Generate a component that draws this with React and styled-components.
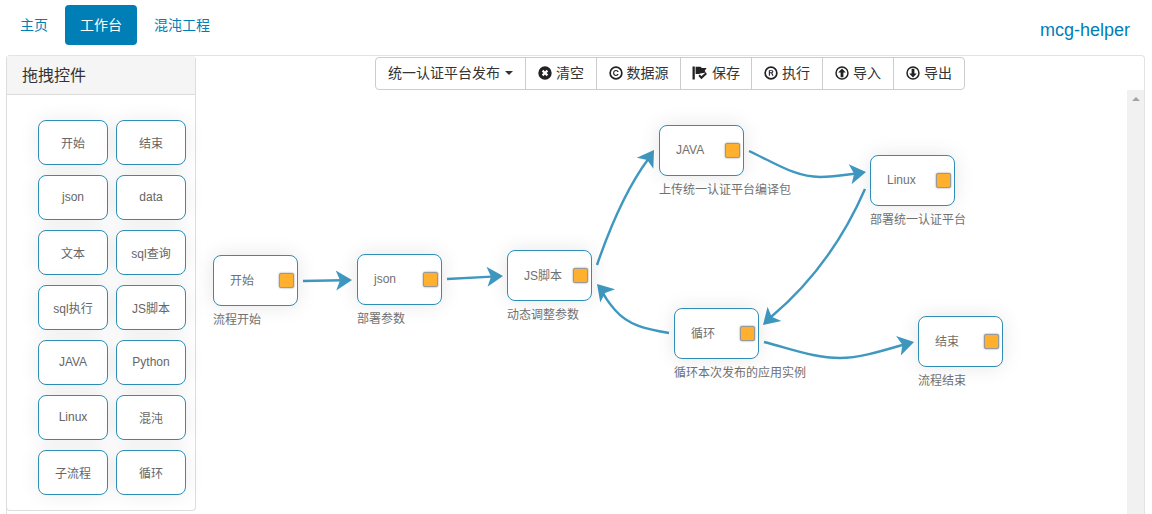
import React from 'react';
import styled, { createGlobalStyle } from 'styled-components';

const BLUE = '#007eb6';
const LINE = '#3f98bf';

const GlobalStyle = createGlobalStyle`
  html, body {
    margin: 0;
    padding: 0;
    height: 514px;
    overflow: hidden;
    background: #fff;
  }
  body {
    font-family: "Liberation Sans", "Noto Sans CJK SC", sans-serif;
    font-size: 14px;
    color: #333;
  }
`;

const Page = styled.div`
  width: 1152px;
  height: 514px;
  overflow: hidden;
  display: flex;
  flex-direction: column;
`;

const Header = styled.header`
  height: 55px;
  padding: 5px 22px 0 5px;
  box-sizing: border-box;
  display: flex;
  justify-content: space-between;
`;

const Nav = styled.nav`
  display: flex;
  gap: 2px;
  height: 40px;
`;

const Tab = styled.a`
  display: flex;
  align-items: center;
  padding: 0 15px 2px;
  border-radius: 4px;
  font-size: 14px;
  color: ${({ $active }) => ($active ? '#fff' : BLUE)};
  background: ${({ $active }) => ($active ? BLUE : 'transparent')};
`;

const Brand = styled.a`
  font-size: 18px;
  line-height: 20px;
  margin-top: 15px;
  color: ${BLUE};
`;

const Workspace = styled.main`
  flex: 1;
  display: flex;
  margin: 0 7px 0 6px;
  border: 1px solid #e3e3e3;
  border-bottom: 0;
  border-radius: 4px 4px 0 0;
  min-height: 0;
`;

const Panel = styled.aside`
  width: 190px;
  height: 455px;
  margin-left: -1px;
  box-sizing: border-box;
  border: 1px solid #ddd;
  border-top: 0;
  border-radius: 4px;
  display: flex;
  flex-direction: column;
`;

const PanelHeading = styled.h3`
  margin: 0;
  height: 39px;
  flex: none;
  box-sizing: border-box;
  padding: 0 0 3px 15px;
  display: flex;
  align-items: center;
  font-size: 16px;
  font-weight: 400;
  color: #333;
  background: #f5f5f5;
  border-bottom: 1px solid #ddd;
`;

const Palette = styled.div`
  display: grid;
  grid-template-columns: 70px 70px;
  grid-auto-rows: 45px;
  gap: 10px 8px;
  padding: 25px 0 0 31px;
`;

const PaletteItem = styled.div`
  box-sizing: border-box;
  display: flex;
  align-items: center;
  justify-content: center;
  padding-bottom: 1px;
  background: #fff;
  border: 1px solid #2d8fb6;
  border-radius: 8px;
  box-shadow: 0 0 20px rgba(0, 0, 0, 0.08);
  font-size: 12px;
  color: #666;
`;

const Main = styled.section`
  flex: 1;
  min-width: 0;
  display: flex;
  flex-direction: column;
  position: relative;
`;

const ToolbarRow = styled.div`
  height: 34px;
  flex: none;
  box-sizing: border-box;
  display: flex;
  justify-content: center;
  padding-top: 1px;
`;

const ToolGroup = styled.div`
  display: flex;
  height: 33px;
  box-sizing: border-box;
  border: 1px solid #ccc;
  border-radius: 4px;
  background: #fff;
`;

const ToolButton = styled.button`
  height: 31px;
  width: ${({ $w }) => $w}px;
  box-sizing: border-box;
  padding: 0 0 4px;
  display: flex;
  align-items: center;
  justify-content: center;
  gap: 4px;
  background: transparent;
  border: 0;
  border-left: ${({ $first }) => ($first ? '0' : '1px solid #ccc')};
  box-shadow: ${({ $open }) => ($open ? '1px 0 0 #ccc' : 'none')};
  font: inherit;
  font-size: 14px;
  color: #333;
`;

const Caret = styled.span`
  display: inline-block;
  margin: 2px 0 0 1px;
  border-top: 4px solid #333;
  border-left: 4px solid transparent;
  border-right: 4px solid transparent;
`;

const CanvasRow = styled.div`
  flex: 1;
  display: flex;
  min-height: 0;
`;

const Canvas = styled.div`
  flex: 1;
  position: relative;
`;

const Edges = styled.svg`
  position: absolute;
  left: -196px;
  top: -90px;
  width: 1152px;
  height: 514px;
  pointer-events: none;
`;

const Node = styled.div`
  position: absolute;
  left: ${({ $x }) => $x - 196}px;
  top: ${({ $y }) => $y - 90}px;
  width: 85px;
  height: 51px;
  box-sizing: border-box;
  padding: 0 0 2px 16px;
  display: flex;
  align-items: center;
  background: #fff;
  border: 1px solid #2d8fb6;
  border-radius: 8px;
  box-shadow: 0 0 20px rgba(0, 0, 0, 0.1);
  font-size: 12px;
  color: #707070;
`;

const Handle = styled.span`
  position: absolute;
  right: 3px;
  top: 17px;
  width: 15px;
  height: 15px;
  box-sizing: border-box;
  background: #ffb02e;
  border: 1px solid #999;
  border-radius: 2px;
  box-shadow: 0 0 2px #888;
`;

const NodeCaption = styled.span`
  position: absolute;
  left: -1px;
  top: 56px;
  white-space: nowrap;
  font-size: 12px;
  line-height: 17px;
  color: #707070;
`;

const Scrollbar = styled.div`
  width: 17px;
  flex: none;
  background: #f1f1f1;
  display: flex;
  justify-content: center;
  padding-top: 7px;
  box-sizing: border-box;
`;

const ScrollUp = styled.span`
  width: 0;
  height: 0;
  border-bottom: 4px solid #a3a3a3;
  border-left: 4px solid transparent;
  border-right: 4px solid transparent;
`;

const Glyph = styled.svg`
  width: ${({ $w }) => $w || 14}px;
  height: 14px;
  flex: none;
  fill: #222;
  margin-top: 3px;
`;

const Icon = ({ name }) => {
  if (name === 'clear') {
    return (
      <Glyph viewBox="0 0 14 14">
        <path fillRule="evenodd" d="M7 0.3a6.7 6.7 0 1 0 0 13.4a6.7 6.7 0 1 0 0-13.4zM5.4 3.8L7 5.4L8.6 3.8L10.2 5.4L8.6 7L10.2 8.6L8.6 10.2L7 8.6L5.4 10.2L3.8 8.6L5.4 7L3.8 5.4z" />
      </Glyph>
    );
  }
  if (name === 'source' || name === 'run') {
    return (
      <Glyph viewBox="0 0 14 14">
        <path fillRule="evenodd" d="M7 0.3a6.7 6.7 0 1 0 0 13.4a6.7 6.7 0 1 0 0-13.4zM7 2a5 5 0 1 1 0 10a5 5 0 1 1 0-10z" />
        {name === 'source' ? (
          <path d="M9.6 5.9H8.3C8.1 5.4 7.6 5.1 7 5.1C6 5.1 5.2 5.9 5.2 7C5.2 8.1 6 8.9 7 8.9C7.6 8.9 8.1 8.6 8.3 8.1H9.6C9.3 9.3 8.3 10 7 10C5.3 10 4.1 8.7 4.1 7C4.1 5.3 5.3 4 7 4C8.3 4 9.3 4.7 9.6 5.9Z" />
        ) : (
          <path fillRule="evenodd" d="M4.8 4.2H7.7C8.7 4.2 9.3 4.8 9.3 5.6C9.3 6.3 8.9 6.8 8.3 7L9.5 9.8H8.3L7.2 7.2H5.9V9.8H4.8zM5.9 5.1V6.3H7.5C8 6.3 8.2 6 8.2 5.7C8.2 5.4 8 5.1 7.5 5.1z" />
        )}
      </Glyph>
    );
  }
  if (name === 'save') {
    return (
      <Glyph $w={16} viewBox="0 0 16 14">
        <path d="M0.5 0.5H2.8V13.5H0.5zM3.6 0.8H8.6L9.8 2H14.6L12.6 5L14.2 6.6L8.2 7.6L7 8H3.6z" />
        <path d="M6.4 10L7.8 8.6L9.4 10.2L13.6 6.6L15 8L9.4 13.2z" />
      </Glyph>
    );
  }
  const up = name === 'import';
  return (
    <Glyph viewBox="0 0 14 14">
      <path fillRule="evenodd" d="M7 0.3a6.7 6.7 0 1 0 0 13.4a6.7 6.7 0 1 0 0-13.4zM7 1.8a5.2 5.2 0 1 1 0 10.4a5.2 5.2 0 1 1 0-10.4z" />
      <path
        d={
          up
            ? 'M7 2.6L10.8 6.6H8.4V11.2H5.6V6.6H3.2z'
            : 'M7 11.4L10.8 7.4H8.4V2.8H5.6V7.4H3.2z'
        }
      />
    </Glyph>
  );
};

const tools = [
  { name: 'clear', label: '清空', w: 71 },
  { name: 'source', label: '数据源', w: 84 },
  { name: 'save', label: '保存', w: 71 },
  { name: 'run', label: '执行', w: 71 },
  { name: 'import', label: '导入', w: 71 },
  { name: 'export', label: '导出', w: 71 },
];

const paletteItems = [
  '开始', '结束', 'json', 'data', '文本', 'sql查询', 'sql执行',
  'JS脚本', 'JAVA', 'Python', 'Linux', '混沌', '子流程', '循环',
];

const nodes = [
  { x: 213, y: 255, title: '开始', caption: '流程开始' },
  { x: 357, y: 254, title: 'json', caption: '部署参数' },
  { x: 507, y: 250, title: 'JS脚本', caption: '动态调整参数' },
  { x: 659, y: 125, title: 'JAVA', caption: '上传统一认证平台编译包' },
  { x: 870, y: 155, title: 'Linux', caption: '部署统一认证平台' },
  { x: 674, y: 308, title: '循环', caption: '循环本次发布的应用实例' },
  { x: 918, y: 316, title: '结束', caption: '流程结束' },
];

// tip = arrow head point, angle = direction the head points in degrees
const edges = [
  { d: 'M303 281L342 280.3', tip: [352, 280], angle: -1.5 },
  { d: 'M447 279L492 276.6', tip: [503, 276], angle: -3 },
  { d: 'M597 265C608 233 625 190 649 158', tip: [654, 150], angle: -56 },
  { d: 'M749 151C775 163 795 177 820 177C832 177 845 175 856 173.5', tip: [866, 172], angle: -8 },
  { d: 'M865 189C845 235 815 280 771 317', tip: [763, 325], angle: 136 },
  { d: 'M669 333C645 329 628 325 615 310C609 303 605 298 602 291', tip: [597, 284], angle: -132 },
  { d: 'M764 342C795 350 815 358 840 358C860 358 885 350 904 344.5', tip: [914, 342], angle: -13.6 },
];

const Arrow = ({ tip, angle }) => (
  <polygon
    points="0,0 -16,-10 -12,0 -16,10"
    fill={LINE}
    transform={`translate(${tip[0]} ${tip[1]}) rotate(${angle})`}
  />
);

export default function App() {
  return (
    <Page>
      <GlobalStyle />
      <Header>
        <Nav>
          <Tab>主页</Tab>
          <Tab $active>工作台</Tab>
          <Tab>混沌工程</Tab>
        </Nav>
        <Brand>mcg-helper</Brand>
      </Header>
      <Workspace>
        <Panel>
          <PanelHeading>拖拽控件</PanelHeading>
          <Palette>
            {paletteItems.map((item) => (
              <PaletteItem key={item}>{item}</PaletteItem>
            ))}
          </Palette>
        </Panel>
        <Main>
          <ToolbarRow>
            <ToolGroup>
              <ToolButton $first $open $w={149}>
                统一认证平台发布 <Caret />
              </ToolButton>
              {tools.map((tool) => (
                <ToolButton key={tool.name} $w={tool.w}>
                  <Icon name={tool.name} />
                  {tool.label}
                </ToolButton>
              ))}
            </ToolGroup>
          </ToolbarRow>
          <CanvasRow>
            <Canvas>
              <Edges viewBox="0 0 1152 514" fill="none">
                {edges.map((edge) => (
                  <g key={edge.d}>
                    <path d={edge.d} stroke={LINE} strokeWidth="2.4" />
                    <Arrow tip={edge.tip} angle={edge.angle} />
                  </g>
                ))}
              </Edges>
              {nodes.map((node) => (
                <Node key={node.title} $x={node.x} $y={node.y}>
                  {node.title}
                  <Handle />
                  <NodeCaption>{node.caption}</NodeCaption>
                </Node>
              ))}
            </Canvas>
            <Scrollbar>
              <ScrollUp />
            </Scrollbar>
          </CanvasRow>
        </Main>
      </Workspace>
    </Page>
  );
}
